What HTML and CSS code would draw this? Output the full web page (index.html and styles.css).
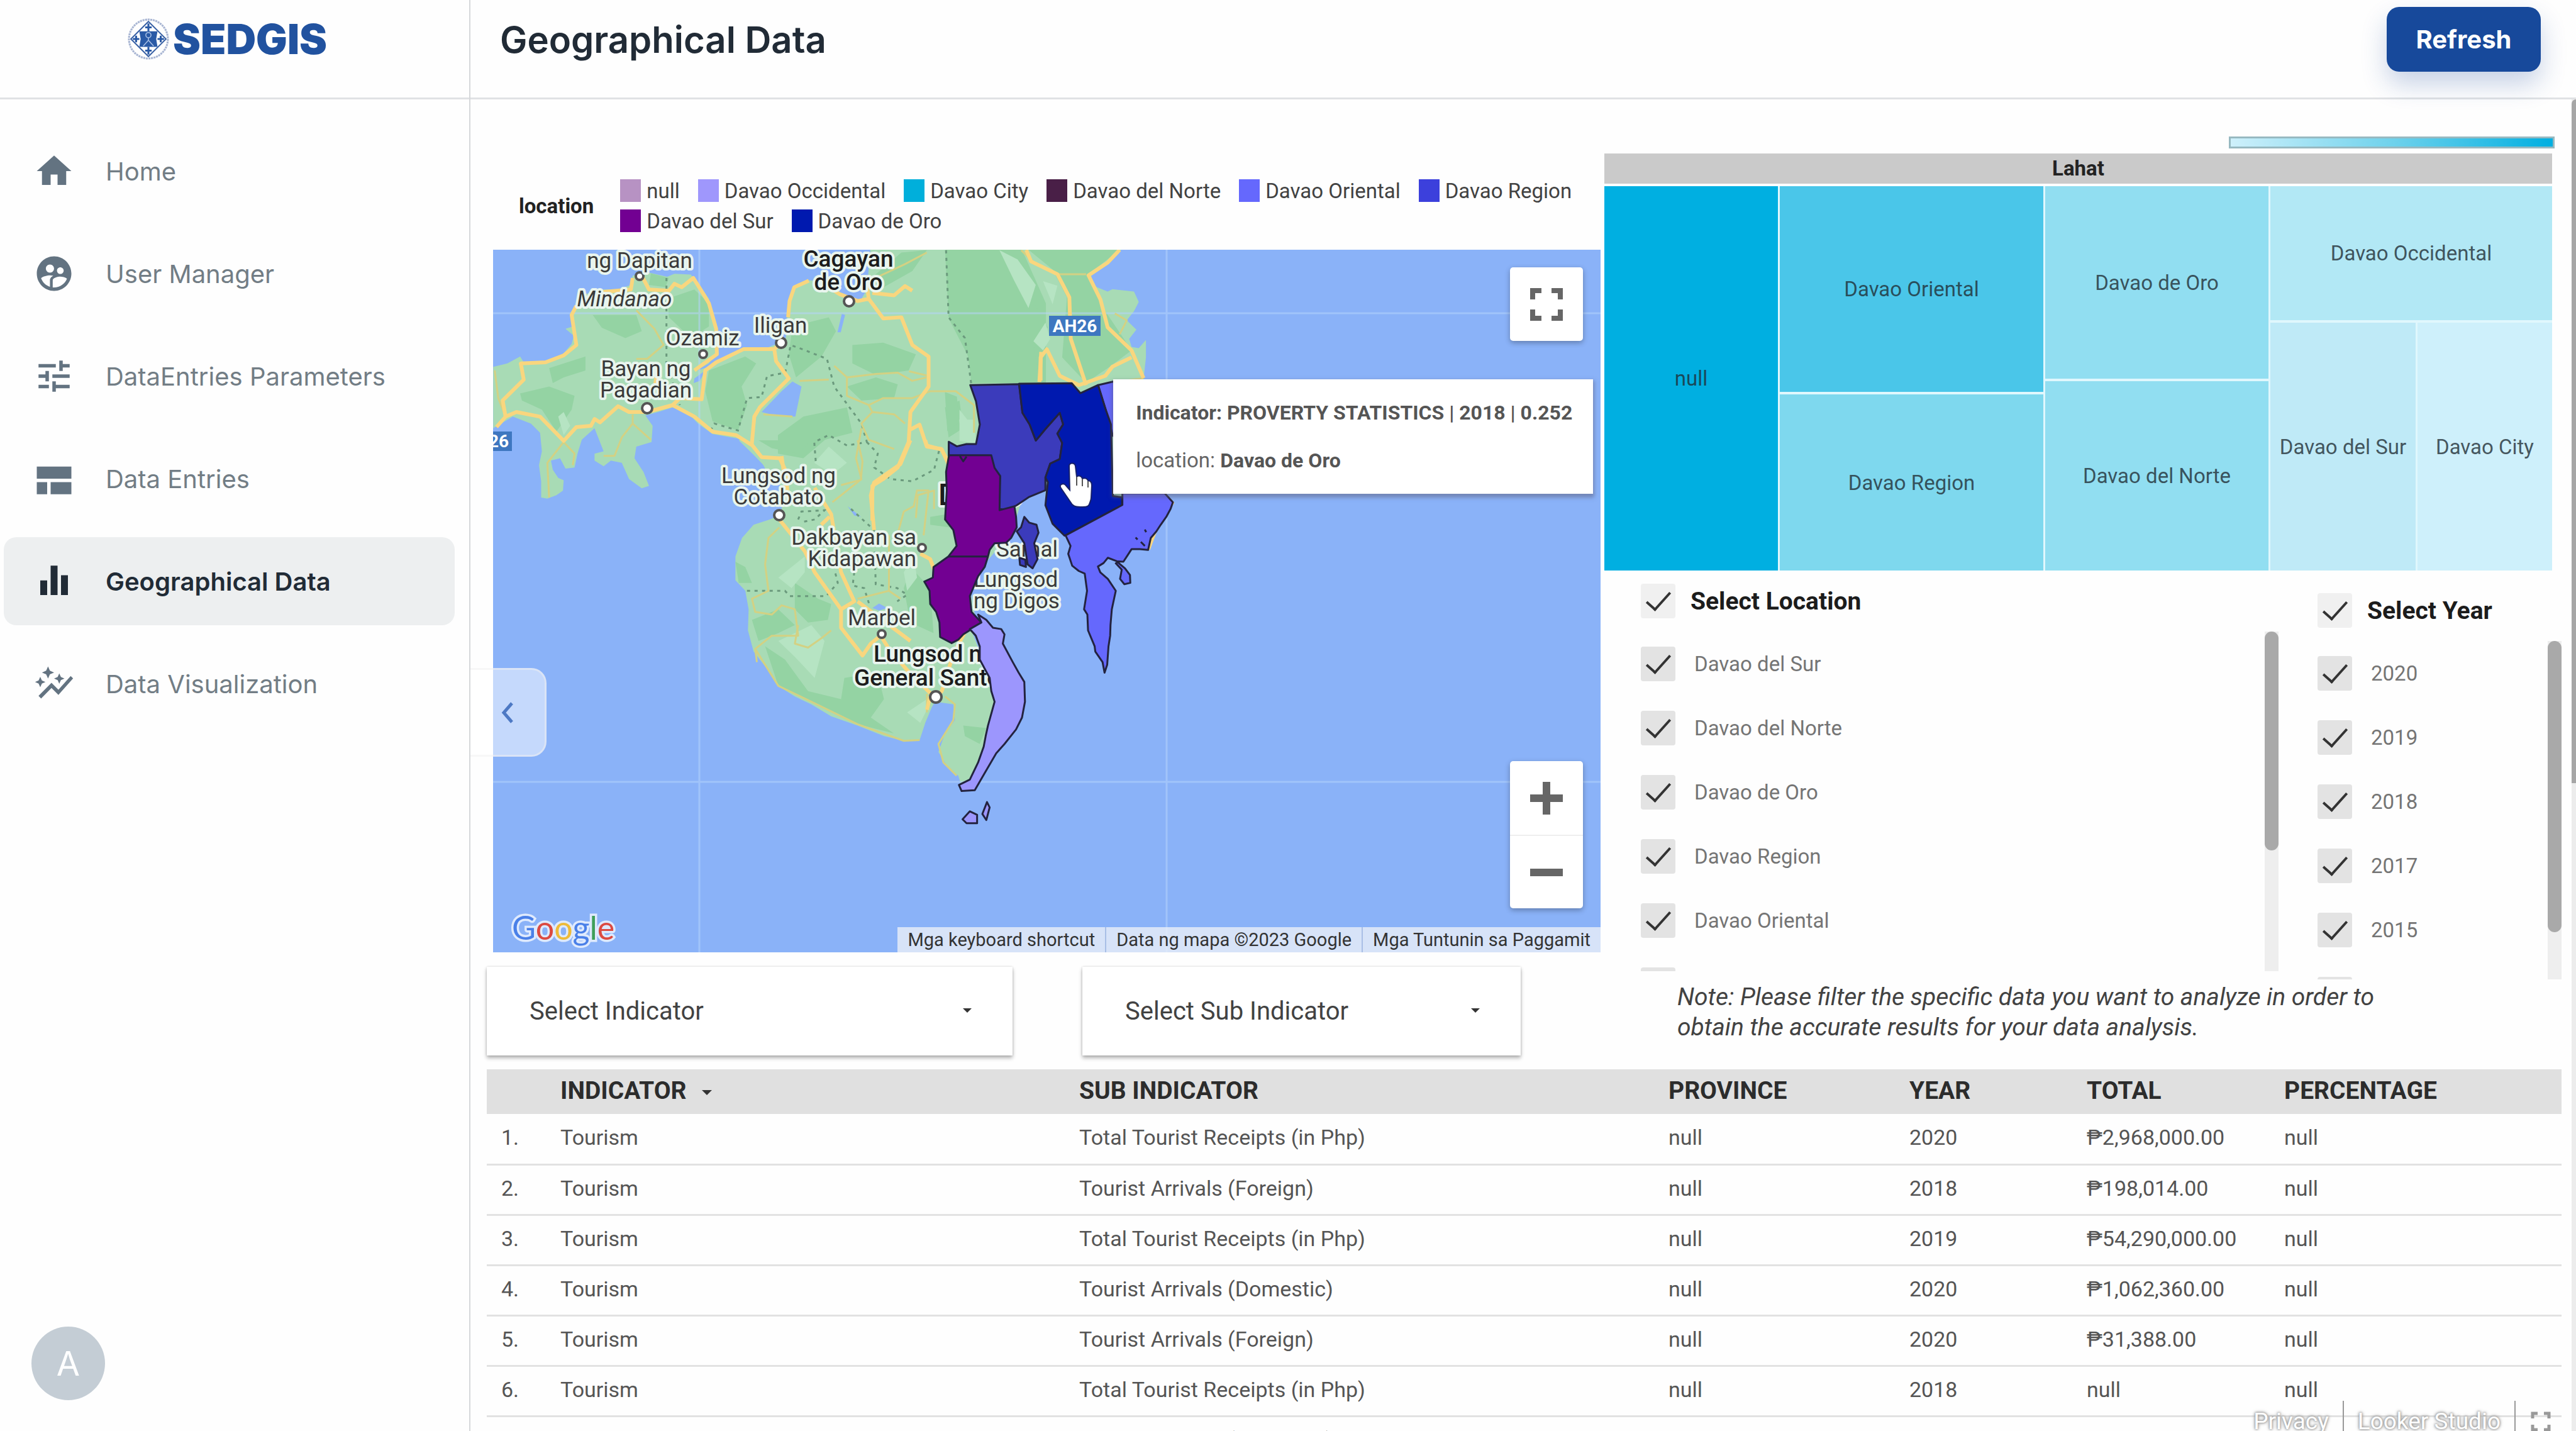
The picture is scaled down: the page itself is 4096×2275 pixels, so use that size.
FILE: index.html
```html
<!DOCTYPE html>
<html lang="en">
<head>
<meta charset="utf-8">
<title>SEDGIS - Geographical Data</title>
<link rel="stylesheet" href="styles.css">
</head>
<body>
<div class="app">
  <aside class="sidebar">
    <a class="brand" href="#">
      <svg class="brand-mark" viewBox="0 0 64 64" aria-hidden="true">
        <circle cx="32" cy="32" r="30" fill="none" stroke="#a9b6d3" stroke-width="3" stroke-dasharray="3 1"/>
        <path d="M32 5 59 32 32 59 5 32Z" fill="#fff" stroke="#3a62a5" stroke-width="2"/>
        <path d="M18 20h28l-2 12 2 12H18l2-12Z" fill="#2a5aa6"/>
        <path d="M32 8v12M32 44v12M8 32h10M46 32h10M27 14h10M27 50h10M13 27v10M51 27v10" stroke="#2a5aa6" stroke-width="3"/>
        <circle cx="32" cy="26" r="4" fill="none" stroke="#a9c0e6" stroke-width="1.5"/>
        <path d="M32 30v4l-8 9M32 34l8 9" fill="none" stroke="#a9c0e6" stroke-width="1.5"/>
      </svg>
      <span class="brand-name">SEDGIS</span>
    </a>
    <nav class="nav">
      <a class="nav-item" href="#"><svg class="nav-icon" viewBox="0 0 24 24"><path d="M10 20v-6h4v6h5v-8h3L12 3 2 12h3v8z"/></svg>Home</a>
      <a class="nav-item" href="#"><svg class="nav-icon" viewBox="0 0 24 24"><path d="M12 2C6.480 2 2 6.480 2 12s4.480 10 10 10 10-4.480 10-10S17.520 2 12 2zm3.610 6.340c1.070 0 1.930.86 1.930 1.930s-.86 1.930-1.930 1.930-1.930-.86-1.930-1.930c-.01-1.070.86-1.930 1.930-1.930zm-6-1.580c1.300 0 2.360 1.060 2.360 2.360s-1.060 2.360-2.360 2.360-2.360-1.060-2.360-2.360c0-1.310 1.050-2.360 2.360-2.360zm0 9.130v3.750c-2.400-.75-4.300-2.600-5.140-4.960 1.050-1.120 3.670-1.690 5.140-1.690.53 0 1.200.08 1.900.22-1.640.87-1.900 2.020-1.900 2.680zM12 20c-.27 0-.53-.01-.79-.04v-4.070c0-1.420 2.940-2.130 4.400-2.130 1.070 0 2.920.39 3.840 1.150C18.280 17.880 15.390 20 12 20z"/></svg>User Manager</a>
      <a class="nav-item" href="#"><svg class="nav-icon" viewBox="0 0 24 24"><path d="M3 17v2h6v-2H3zM3 5v2h10V5H3zm10 16v-2h8v-2h-8v-2h-2v6h2zM7 9v2H3v2h4v2h2V9H7zm14 4v-2H11v2h10zm-6-4h2V7h4V5h-4V3h-2v6z"/></svg>DataEntries Parameters</a>
      <a class="nav-item" href="#"><svg class="nav-icon" viewBox="0 0 24 24"><path d="M2 5h20v7H2zM2 14h6v7H2zM10 14h12v7H10z"/></svg>Data Entries</a>
      <a class="nav-item nav-item-active" href="#" aria-current="page"><svg class="nav-icon" viewBox="0 0 24 24"><path d="M4 11.500h4V20H4zM10 3h4v17h-4zM16 8.500h4V20h-4z"/></svg>Geographical Data</a>
      <a class="nav-item" href="#"><svg class="nav-icon" viewBox="0 0 24 24"><path d="M14.060 9.940 12 9l2.060-.94L15 6l.94 2.060L18 9l-2.060.94L15 12l-.94-2.060zM4 14l.94-2.060L7 11l-2.060-.94L4 8l-.94 2.060L1 11l2.060.94L4 14zm4.500-5 1.090-2.410L12 5.500 9.590 4.410 8.500 2 7.410 4.410 5 5.500l2.410 1.090L8.500 9zm-4 11.500 6-6.010 4 4L23 8.930l-1.410-1.410-7.090 7.970-4-4L3 19l1.500 1.500z"/></svg>Data Visualization</a>
    </nav>
    <div class="avatar">A</div>
  </aside>

  <div class="page">
    <header class="topbar">
      <h1>Geographical Data</h1>
      <button class="refresh" type="button">Refresh</button>
    </header>

    <main class="report">
      <div class="panels">
        <section class="left">
          <div class="legend">
            <strong class="legend-title">location</strong>
            <ul class="legend-list">
              <li><i class="sw sw-null"></i>null</li>
              <li><i class="sw sw-occidental"></i>Davao Occidental</li>
              <li><i class="sw sw-city"></i>Davao City</li>
              <li><i class="sw sw-norte"></i>Davao del Norte</li>
              <li><i class="sw sw-oriental"></i>Davao Oriental</li>
              <li><i class="sw sw-region"></i>Davao Region</li>
              <li><i class="sw sw-sur"></i>Davao del Sur</li>
              <li><i class="sw sw-oro"></i>Davao de Oro</li>
            </ul>
          </div>

          <div class="map">
            <svg class="map-canvas" viewBox="0 0 1761 1117" preserveAspectRatio="xMidYMid slice">
              <rect width="1761" height="1117" fill="#8ab2f8"/>
              <!-- land -->
              <g fill="#a8dbb5">
                <g transform="matrix(.5774 0 0 .3674 -26.3 -149.8)">
                  <path d="M46 915 85 900 120 870 130 895 190 890 235 865 262 815 268 780 245 750 265 740 262 690 275 655 300 600 345 580 390 580 425 560 430 520 470 505 525 525 545 512 590 515 605 545 640 620 650 700 662 760 662 850 640 900 600 935 655 905 700 865 730 835 800 832 850 800 855 760 855 700 862 620 875 570 915 540 960 545 1000 600 1020 630 1060 620 1075 580 1085 400 1600 400 1565 1430 1500 1500 1480 1600 865 1600 850 1500 845 1440 800 1370 790 1340 760 1270 720 1225 650 1205 610 1160 580 1110 540 1090 500 1110 465 1125 485 1170 482 1240 440 1260 435 1310 460 1370 475 1430 455 1440 420 1400 400 1330 370 1320 350 1345 325 1320 325 1290 350 1280 335 1220 325 1180 290 1230 278 1290 270 1350 245 1355 230 1310 205 1320 210 1360 225 1395 240 1405 238 1450 220 1470 195 1485 178 1480 178 1410 172 1340 180 1280 175 1200 150 1160 100 1130 46 1180Z"/>
                </g>
                <g transform="matrix(.7611 0 0 .3674 615.7 -34.6)">
                  <path d="M0 90H505L480 150 440 200 445 250 475 275 485 265 530 275 540 320 530 360 515 400 535 440 520 480 525 515 540 520 555 485 555 560 550 655 550 1160 505 1200 385 1330 345 1200 345 1135 290 1190 280 1300 200 1500 0 1500Z"/>
                </g>
                <g transform="matrix(.525 0 0 .4199 327.6 302.9)">
                  <path d="M120 0 165 55 200 100 245 140 265 200 243 285 215 300 165 320 130 370 110 440 110 530 140 570 150 640 148 720 165 800 215 880 240 930 290 970 340 1000 400 1045 480 1080 560 1120 620 1138 668 1135 685 1070 705 1010 715 990 770 1000 775 1060 745 1110 725 1180 750 1230 785 1270 795 1310 820 1290 870 1150 895 990 875 900 850 800 825 720 840 690 820 560 880 400 960 330 960 0Z"/>
                </g>
              </g>
              <!-- forest relief -->
              <g fill="#94d3a3">
                <g transform="matrix(.5774 0 0 .3674 -26.3 -149.8)">
                  <path d="M320 690 440 690 455 760 410 790 345 745ZM120 1030 200 1000 270 1040 262 1100 220 1195 180 1100 125 1060ZM525 620 600 580 640 640 640 740 590 790 530 700ZM640 930 740 870 770 900 730 1000 745 1080 720 1190 650 1150 630 1020ZM200 920 300 870 300 930 240 960 210 985ZM1035 820 1120 810 1210 860 1190 930 1100 950 1035 900ZM870 740 970 700 990 760 950 870 880 960 860 860ZM900 1130 1020 1090 1035 1200 960 1230 900 1310 830 1290 830 1210ZM1020 1000 1100 960 1160 990 1150 1050 1060 1060ZM1290 400 1500 400 1568 640 1568 985 1365 985 1345 790 1300 700ZM1290 1090 1330 1060 1340 1180 1300 1220ZM480 510 530 530 520 570 475 560ZM1080 540 1170 420 1240 410 1200 500 1110 580Z"/>
                </g>
                <g transform="matrix(.7611 0 0 .3674 615.7 -34.6)">
                  <path d="M140 95H260L300 250 350 430 320 520 335 660 190 670 185 560 145 400ZM310 95H500L435 200 470 360 525 530 480 600 430 670 380 560 390 300 360 180ZM135 710 160 730 165 840 140 880Z"/>
                </g>
                <g transform="matrix(.525 0 0 .4199 327.6 302.9)">
                  <path d="M110 460 140 480 160 540 120 540ZM160 680 240 640 290 700 240 730 180 760ZM290 540 360 600 400 620 390 680 330 690 290 640ZM200 780 260 830 330 950 430 980 440 900 540 880 560 980 520 1050 590 1110 480 1075 340 990 240 930ZM640 480 700 560 710 730 640 690 620 560ZM700 290 750 280 760 330 700 320ZM800 1080 870 1090 850 1150 805 1120ZM180 0H340L300 50 220 30Z"/>
                </g>
              </g>
              <g fill="#b6e4c3">
                <g transform="matrix(.5774 0 0 .3674 -26.3 -149.8)">
                  <path d="M930 1330 970 1260 1020 1330 980 1380ZM225 1130 240 1110 258 1170 240 1210ZM1330 1100 1370 1180 1370 1245 1330 1235ZM1440 410 1490 450 1540 560 1520 660 1480 540Z"/>
                </g>
                <g transform="matrix(.7611 0 0 .3674 615.7 -34.6)">
                  <path d="M320 490 345 410 355 480 340 530ZM165 830 195 830 200 930 170 920ZM340 230 370 250 360 330Z"/>
                </g>
                <g transform="matrix(.525 0 0 .4199 327.6 302.9)">
                  <path d="M240 760 340 700 380 760 350 900 290 820ZM630 1030 690 980 690 1020 670 1070ZM240 520 320 440 320 500 280 560ZM620 500 650 440 660 520 630 570Z"/>
                </g>
              </g>
              <!-- inland water -->
              <g fill="#8ab2f8">
                <g transform="matrix(.5774 0 0 .3674 -26.3 -149.8)"><path d="M870 978 895 1000 878 1130 830 1128 785 1110 840 1020ZM1006 685 1015 690 1003 765 994 765ZM600 965 630 930 615 975 598 985Z"/></g>
                <g transform="matrix(.525 0 0 .4199 327.6 302.9)"><path d="M525 635 545 618 570 635 545 645ZM450 250 490 290 470 285Z"/></g>
              </g>
              <!-- graticule -->
              <path d="M328 0V1117M1071 0V1117M0 101H1761M0 846H1761" stroke="#b4d3fb" stroke-opacity=".55" stroke-width="3"/>
              <!-- provincial borders -->
              <g class="borders">
                <g transform="matrix(.5774 0 0 .3674 -26.3 -149.8)">
                  <path d="M523 530V900L560 1080M645 1190 655 1160 720 1190 745 1050 785 1045 800 955 850 940 865 820 900 840 965 880 985 1000 1060 1160 1075 1240 1020 1255 970 1210 930 1240 935 1340M1075 1240 1105 1290 1095 1350 1140 1400 1200 1410 1260 1360 1275 1270M1293 410 1300 700 1345 790 1362 985"/>
                </g>
                <g transform="matrix(.525 0 0 .4199 327.6 302.9)">
                  <path d="M145 570 260 570 275 590 385 590 420 540 410 490M300 300 310 270 380 265 350 300 310 310M460 260 530 340 535 545 600 560 630 585 600 610M470 500 465 550 500 560 515 620"/>
                </g>
              </g>
              <!-- minor roads -->
              <g class="roads-minor">
                <g transform="matrix(.5774 0 0 .3674 -26.3 -149.8)">
                  <path d="M50 930 60 1050 80 1130M440 670 490 750 515 820 470 880 440 880M430 1120 430 1160 400 1220 380 1300 350 1300M430 1160 480 1230M200 1480 195 1330 240 1240 270 1290 265 1340M985 910 1020 960 1100 945 1160 940 1200 975 1240 960M970 970 890 975M1020 960 1020 1040 1080 1080 1090 1110 1060 1160 1080 1230 1150 1270M1090 1110 1150 1120 1180 1160M1080 1080 1120 1050 1200 1050 1250 1020 1320 1020 1370 1080 1370 1200M1060 1180 1045 1310 1060 1400 980 1500M870 1130 790 1120M1085 540 1180 470 1240 420M1500 410 1540 470M1210 1568 1215 1470 1260 1450V1530"/>
                </g>
                <g transform="matrix(.525 0 0 .4199 327.6 302.9)">
                  <path d="M243 330 210 370 200 470 210 570 160 600 170 650 220 660 250 625 290 640 300 740 220 740 170 790 175 840M300 700 290 770 330 785 370 750 400 720M430 170 490 150 495 80 480 0M600 360 620 270 650 250 660 190H695L680 360M575 360 575 570 480 600M575 570 610 600M170 790 240 930 340 990 480 1075 620 1138 668 1135M690 960V1030M745 970 775 1000 770 1060 725 1150 740 1220 780 1270"/>
                </g>
                <g transform="matrix(.7611 0 0 .3674 615.7 -34.6)">
                  <path d="M370 200H430M490 370 515 400 500 460M60 620 100 640M480 670 550 650"/>
                </g>
              </g>
              <!-- highways -->
              <g class="roads">
                <g transform="matrix(.5774 0 0 .3674 -26.3 -149.8)">
                  <path d="M55 1175 80 1130 110 1110 175 1130 240 1235 275 1175 315 1170 325 1140 340 1155 390 1085 420 1110 470 1110 540 1080 600 1130 650 1195 715 1210 760 1255 785 1305 835 1310 850 1360 860 1500M80 1130 72 1060 130 970 122 900 190 895 240 865 275 820 270 770 262 690 275 650M430 530 425 580 350 590M455 520 475 580 530 585 545 555 565 570 597 530 625 600 640 640 660 750 662 860 600 930M495 960 490 1010M540 1080 560 1050 620 1055 630 930 660 895 735 838 820 838 825 890 860 965 780 1090 765 1130 758 1250M820 838 845 800M858 700 862 630 875 570 915 542M960 560 1000 600 1050 630 1080 620 1075 560M1080 620 1120 705 1170 700 1200 820 1245 870 1245 1000 1195 1110 1190 1240 1160 1350 1120 1400 1090 1430 1090 1580M1090 595 1150 605 1180 565 1200 585M1190 1190 1220 1165 1240 1260 1280 1270 1300 1330M1550 980 1555 850"/>
                </g>
                <g transform="matrix(.7611 0 0 .3674 615.7 -34.6)">
                  <path d="M305 95 315 145 370 200 395 300 398 480 430 680M500 95 475 150 435 205 460 310 475 430 525 530 550 650M335 660 335 560 348 525 375 640 415 680 470 640 485 600 525 560M598 1165 610 1190 585 1250 560 1390"/>
                </g>
                <g transform="matrix(.525 0 0 .4199 327.6 302.9)">
                  <path d="M250 60 265 200M243 300 320 420 350 500 430 640 430 710 495 815 520 770 550 740 575 790 630 870 710 970M350 180 400 280 430 500 470 610 430 640M640 0 610 90 530 160 520 210 530 340M480 610 640 760M685 0 690 20 735 35 755 90M670 430 700 450 715 500M810 715 770 810 735 950 715 980M700 970 690 1020M395 290 370 320"/>
                </g>
              </g>
              <!-- towns -->
              <g class="towns">
                <circle cx="233" cy="42" r="6"/><circle cx="334" cy="166" r="6"/><circle cx="245" cy="252" r="8"/><circle cx="458" cy="148" r="8"/><circle cx="566" cy="82" r="8"/><circle cx="455" cy="422" r="8"/><circle cx="682" cy="474" r="6"/><circle cx="618" cy="611" r="6"/><circle cx="704" cy="711" r="9"/>
              </g>
              <g class="map-text">
                <text x="233" y="29" text-anchor="middle">ng Dapitan</text>
                <text x="209" y="90" text-anchor="middle" font-style="italic">Mindanao</text>
                <text x="457" y="132" text-anchor="middle">Iligan</text>
                <text x="333" y="152" text-anchor="middle">Ozamiz</text>
                <text x="243" y="201" text-anchor="middle">Bayan ng</text>
                <text x="243" y="235" text-anchor="middle">Pagadian</text>
                <text x="454" y="371" text-anchor="middle">Lungsod ng</text>
                <text x="454" y="405" text-anchor="middle">Cotabato</text>
                <text x="673" y="469" text-anchor="end">Dakbayan sa</text>
                <text x="673" y="503" text-anchor="end">Kidapawan</text>
                <text x="618" y="597" text-anchor="middle">Marbel</text>
                <text x="800" y="488">Samal</text>
                <text x="764" y="536">Lungsod</text>
                <text x="764" y="570">ng Digos</text>
              </g>
              <g class="map-text map-text-city">
                <text x="565" y="27" text-anchor="middle">Cagayan</text>
                <text x="565" y="64" text-anchor="middle">de Oro</text>
                <text x="605" y="655">Lungsod ng</text>
                <text x="574" y="693">General Santos</text>
                <text x="708" y="406" class="map-text-capital">Davao</text>
              </g>
              <!-- provinces -->
              <g class="provinces">
                <g transform="matrix(.7611 0 0 .3674 615.7 -34.6)">
                  <path fill="#3b3bbb" d="M188 680 290 676 297 800 312 850 325 920 345 870 375 800 382 850 370 890 380 930 375 1000 355 1020 345 1080 345 1135 310 1165 285 1200 265 1222 248 1215 250 1075 238 1050 230 985H143L143 925 160 945 180 935 200 935 208 850 200 750Z"/>
                  <path fill="#6568fd" d="M455 680 486 665 560 700 580 900 486 900 470 780Z"/>
                  <path fill="#0019af" d="M290 674 400 672 418 715 455 680 470 780 482 850 486 1160 505 1165V1200L385 1332 360 1280 345 1200 350 1100 345 1080 355 1020 375 1000 380 930 370 890 382 850 375 800 345 870 325 920 312 850 297 800Z"/>
                </g>
                <g transform="matrix(.525 0 0 .4199 327.6 302.9)">
                  <path fill="#6568fd" d="M1110 360 1282 245V200H1410L1435 235 1428 260 1415 290 1398 320 1385 345 1368 370 1360 415 1335 412 1310 412 1298 435 1285 460 1265 458 1238 445 1225 465 1208 478 1215 500 1238 525 1262 570 1250 640 1246 700 1245 740 1240 780 1236 850 1228 880 1222 840 1200 800 1198 780 1178 720 1176 660 1166 640 1175 570 1168 505 1150 495 1130 475 1118 430 1125 400ZM1268 462 1290 485 1305 510 1306 540 1288 545 1275 525 1280 490 1262 466Z"/>
                  <path fill="#720092" d="M757 57H885L895 105 912 135 910 265 955 250 960 290 962 330 945 370 930 388 895 390 880 415 875 440 865 480 845 515 830 560 820 590 825 650 840 670 855 690 825 715 800 735 785 755 765 768 730 745 728 690 718 650 700 620 698 570 682 535 708 520 710 480 755 440 780 400 770 340 745 300 750 190 748 120Z"/>
                  <path fill="none" d="M755 440H875M790 60 800 80 810 62M1322 368 1328 376M1338 385 1350 400M1350 338 1354 348"/>
                  <path fill="#3b3bbb" d="M985 290 1000 312 1022 320 1028 350 1015 390 1025 450 1010 485 995 470 985 390 962 345 975 330ZM970 445 988 452 990 480 972 472Z"/>
                  <path fill="#9c96fd" d="M845 660 870 680 890 710 915 715 925 735 920 770 950 840 968 880 985 915 987 990 978 1050 960 1095 925 1150 900 1185 865 1260 835 1325 795 1328 787 1305 820 1285 845 1220 862 1160 868 1120 875 1080 895 990 885 950 880 900 850 830 850 780 838 740 820 715 855 690ZM798 1435 820 1405 842 1418 842 1450 810 1450ZM872 1370 880 1390 870 1438 858 1415Z"/>
                </g>
              </g>
              <!-- route shields -->
              <g class="shields">
                <rect x="884" y="105" width="82" height="32"/><text x="925" y="131" text-anchor="middle">AH26</text>
                <rect x="0" y="289" width="30" height="31"/><text x="-7" y="314">26</text>
              </g>
              <!-- pointer -->
              <path d="M916 344c0-6 9-6 10 0l2 17c3-3 8-1 9 3 4-2 8 0 9 3 4 0 6 3 6 8l-1 19c0 5-2 7-3 11-2 4-6 4-14 4-9 0-13-2-16-8l-15-22c-4-6 4-9 8-4l6 7z" fill="#fff" stroke="#16206a" stroke-width="2"/>
              <path d="M928 361v14M937 364v12M946 368v10" stroke="#555" stroke-width="2"/>
            </svg>

            <div class="tooltip">
              <p class="tooltip-line"><b>Indicator: PROVERTY STATISTICS | 2018 | 0.252</b></p>
              <p class="tooltip-line">location: <b>Davao de Oro</b></p>
            </div>
            <button class="map-button map-fullscreen" type="button" aria-label="Fullscreen">
              <svg viewBox="0 0 52 52"><path d="M4 18V4h14M34 4h14v14M48 34v14H34M18 48H4V34" fill="none" stroke="#666" stroke-width="8"/></svg>
            </button>
            <div class="map-zoom">
              <button class="map-button" type="button" aria-label="Zoom in"><svg viewBox="0 0 52 52"><path d="M0 26h52M26 0v52" stroke="#666" stroke-width="12"/></svg></button>
              <button class="map-button" type="button" aria-label="Zoom out"><svg viewBox="0 0 52 52"><path d="M0 26h52" stroke="#666" stroke-width="12"/></svg></button>
            </div>
            <div class="google"><span class="g-blue">G</span><span class="g-red">o</span><span class="g-yellow">o</span><span class="g-blue">g</span><span class="g-green">l</span><span class="g-red">e</span></div>
            <div class="attribution"><a href="#">Mga keyboard shortcut</a><span>Data ng mapa ©2023 Google</span><a href="#">Mga Tuntunin sa Paggamit</a></div>
          </div>

          <div class="dropdowns">
            <div class="dropdown"><select aria-label="Select Indicator"><option>Select Indicator</option></select></div>
            <div class="dropdown dropdown-sub"><select aria-label="Select Sub Indicator"><option>Select Sub Indicator</option></select></div>
          </div>
        </section>

        <section class="right">
          <div class="treemap">
            <div class="scale"></div>
            <div class="tm-head">Lahat</div>
            <div class="tm-body">
              <div class="tm-cell tm-null">null</div>
              <div class="tm-col tm-col-a">
                <div class="tm-cell tm-oriental">Davao Oriental</div>
                <div class="tm-cell tm-region">Davao Region</div>
              </div>
              <div class="tm-col tm-col-b">
                <div class="tm-cell tm-oro">Davao de Oro</div>
                <div class="tm-cell tm-norte">Davao del Norte</div>
              </div>
              <div class="tm-col tm-col-c">
                <div class="tm-cell tm-occidental">Davao Occidental</div>
                <div class="tm-pair">
                  <div class="tm-cell tm-sur">Davao del Sur</div>
                  <div class="tm-cell tm-city">Davao City</div>
                </div>
              </div>
            </div>
          </div>

          <div class="filters">
            <fieldset class="filter filter-location">
              <label class="filter-head"><input type="checkbox" checked>Select Location</label>
              <div class="filter-scroll">
                <div class="filter-list">
                  <label><input type="checkbox" checked>Davao del Sur</label>
                  <label><input type="checkbox" checked>Davao del Norte</label>
                  <label><input type="checkbox" checked>Davao de Oro</label>
                  <label><input type="checkbox" checked>Davao Region</label>
                  <label><input type="checkbox" checked>Davao Oriental</label>
                  <label><input type="checkbox" aria-label="Davao Occidental"></label>
                </div>
                <div class="track"><div class="thumb"></div></div>
              </div>
            </fieldset>
            <fieldset class="filter filter-year">
              <label class="filter-head"><input type="checkbox" checked>Select Year</label>
              <div class="filter-scroll">
                <div class="filter-list">
                  <label><input type="checkbox" checked>2020</label>
                  <label><input type="checkbox" checked>2019</label>
                  <label><input type="checkbox" checked>2018</label>
                  <label><input type="checkbox" checked>2017</label>
                  <label><input type="checkbox" checked>2015</label>
                  <label><input type="checkbox" aria-label="2014"></label>
                </div>
                <div class="track"><div class="thumb"></div></div>
              </div>
            </fieldset>
          </div>
          <p class="note">Note: Please filter the specific data you want to analyze in order to<br>obtain the accurate results for your data analysis.</p>
        </section>
      </div>

      <table class="data">
        <colgroup><col class="c-num"><col class="c-indicator"><col class="c-sub"><col class="c-province"><col class="c-year"><col class="c-total"><col></colgroup>
        <thead>
          <tr><th></th><th>INDICATOR<i class="sort"></i></th><th>SUB INDICATOR</th><th>PROVINCE</th><th>YEAR</th><th>TOTAL</th><th>PERCENTAGE</th></tr>
        </thead>
        <tbody>
          <tr><td>1.</td><td>Tourism</td><td>Total Tourist Receipts (in Php)</td><td>null</td><td>2020</td><td>₱2,968,000.00</td><td>null</td></tr>
          <tr><td>2.</td><td>Tourism</td><td>Tourist Arrivals (Foreign)</td><td>null</td><td>2018</td><td>₱198,014.00</td><td>null</td></tr>
          <tr><td>3.</td><td>Tourism</td><td>Total Tourist Receipts (in Php)</td><td>null</td><td>2019</td><td>₱54,290,000.00</td><td>null</td></tr>
          <tr><td>4.</td><td>Tourism</td><td>Tourist Arrivals (Domestic)</td><td>null</td><td>2020</td><td>₱1,062,360.00</td><td>null</td></tr>
          <tr><td>5.</td><td>Tourism</td><td>Tourist Arrivals (Foreign)</td><td>null</td><td>2020</td><td>₱31,388.00</td><td>null</td></tr>
          <tr><td>6.</td><td>Tourism</td><td>Total Tourist Receipts (in Php)</td><td>null</td><td>2018</td><td>null</td><td>null</td></tr>
          <tr><td>7.</td><td>Tourism</td><td>Tourist Arrivals (Domestic)</td><td>null</td><td>2019</td><td>₱4,297,207.00</td><td>null</td></tr>
        </tbody>
      </table>
    </main>

    <button class="collapse" type="button" aria-label="Collapse sidebar"><svg viewBox="0 0 20 36"><path d="M17 3 4 18l13 15" fill="none" stroke="#4d79c4" stroke-width="5"/></svg></button>
    <div class="page-track"><div class="page-thumb"></div></div>
    <div class="studio">
      <a href="#">Privacy</a>
      <a href="#">Looker Studio</a>
      <button type="button" aria-label="Full screen"><svg viewBox="0 0 32 32"><path d="M3 11V3h8M21 3h8v8M29 21v8h-8M11 29H3v-8" fill="none" stroke="#999" stroke-width="5"/></svg></button>
    </div>
  </div>
</div>
</body>
</html>
```

FILE: styles.css
```css
* { box-sizing: border-box; }

body {
  margin: 0;
  background: #fefefe;
  color: #424242;
  font-family: Roboto, "Liberation Sans", sans-serif;
  font-size: 33px;
}

a { color: inherit; text-decoration: none; }
button, input, select { font: inherit; color: inherit; }
button { border: 0; padding: 0; cursor: pointer; }

.app {
  display: grid;
  grid-template-columns: 748px minmax(0, 1fr);
  height: 100vh;
  overflow: hidden;
}

/* Sidebar */
.sidebar {
  display: flex;
  flex-direction: column;
  border-right: 2px solid #d6d8da;
}
.brand {
  display: flex;
  align-items: center;
  gap: 6px;
  height: 158px;
  padding: 0 0 32px 203px;
  border-bottom: 3px solid #e0e2e4;
}
.brand-mark { width: 66px; height: 66px; }
.brand-name {
  color: #21529f;
  font-family: Inter, sans-serif;
  font-size: 66px;
  font-weight: 900;
  line-height: 66px;
}
.nav {
  display: flex;
  flex-direction: column;
  gap: 23px;
  padding: 44px 23px 0 6px;
}
.nav-item {
  display: flex;
  align-items: center;
  gap: 49px;
  height: 140px;
  padding-left: 47px;
  border-radius: 20px;
  color: #727d85;
  font-family: Inter, sans-serif;
  font-size: 40px;
}
.nav-icon { width: 66px; height: 66px; fill: #637381; }
.nav-item-active { background: #edeff0; color: #212b36; font-weight: 600; }
.nav-item-active .nav-icon { fill: #212b36; }
.avatar {
  display: grid;
  place-items: center;
  width: 117px;
  height: 117px;
  margin: auto 0 49px 50px;
  border-radius: 50%;
  background: #c4cdd5;
  color: #fff;
  font-family: Inter, sans-serif;
  font-size: 54px;
}

/* Header */
.page { position: relative; min-width: 0; overflow: hidden; }
.topbar {
  display: flex;
  align-items: center;
  justify-content: space-between;
  height: 158px;
  padding: 0 56px 30px 47px;
  border-bottom: 3px solid #e0e2e4;
}
h1 {
  margin: 0;
  color: #212b36;
  font-family: Inter, sans-serif;
  font-size: 58px;
  font-weight: 600;
}
.refresh {
  width: 245px;
  height: 103px;
  border-radius: 20px;
  background: #17499b;
  box-shadow: 0 20px 40px rgba(23, 73, 155, .24);
  color: #fff;
  font-family: Inter, sans-serif;
  font-size: 40px;
  font-weight: 700;
}

/* Report */
.report { padding: 0 23px 0 26px; }
.panels { display: grid; grid-template-columns: 1777fr 1522fr; }

.legend {
  display: flex;
  align-items: center;
  gap: 42px;
  padding: 127px 0 28px 51px;
}
.legend-title { color: #222; }
.legend-list {
  display: flex;
  flex-wrap: wrap;
  gap: 12px 29px;
  margin: 0;
  padding: 0;
  list-style: none;
}
.legend-list li {
  display: flex;
  align-items: center;
  gap: 9px;
  height: 36px;
}
.sw { width: 33px; height: 36px; }
.sw-null { background: #b792c3; }
.sw-occidental { background: #9f97fc; }
.sw-city { background: #00afdb; }
.sw-norte { background: #491f47; }
.sw-oriental { background: #6568fd; }
.sw-region { background: #3c40dc; }
.sw-sur { background: #720092; }
.sw-oro { background: #0019af; }

/* Map */
.map {
  position: relative;
  margin: 0 6px 0 10px;
  aspect-ratio: 1761 / 1117;
  overflow: hidden;
}
.map-canvas { display: block; width: 100%; height: 100%; }
.borders path { fill: none; stroke: #6b9a7d; stroke-width: 3; stroke-dasharray: 5 7; vector-effect: non-scaling-stroke; }
.roads path, .roads-minor path { fill: none; stroke-linejoin: round; vector-effect: non-scaling-stroke; }
.roads path { stroke: #f9d67e; stroke-width: 6; }
.roads-minor path { stroke: #d3d183; stroke-width: 3; }
.towns circle { fill: #fff; stroke: #555; stroke-width: 4; }
.map-text {
  fill: #3a3a3a;
  stroke: #e9f5ee;
  stroke-width: 8px;
  stroke-linejoin: round;
  paint-order: stroke;
  font-size: 35px;
}
.map-text-city { fill: #1c1c1c; font-size: 37px; font-weight: 500; }
.map-text-capital { font-size: 48px; }
.provinces path { stroke: #23233f; stroke-width: 3; stroke-linejoin: round; vector-effect: non-scaling-stroke; }
.shields rect { fill: #3e77c0; }
.shields text { fill: #fff; font-size: 28px; font-weight: 700; }

.tooltip {
  position: absolute;
  top: 18.4%;
  left: 56%;
  width: 43.3%;
  padding: 33px 36px;
  background: #fff;
  box-shadow: 0 4px 6px 2px rgba(90, 90, 120, .5);
  color: #666;
}
.tooltip b { color: #555; font-size: 32px; }
.tooltip-line { margin: 0; line-height: 40px; white-space: nowrap; }
.tooltip-line + .tooltip-line { margin-top: 36px; }

.map-button {
  display: grid;
  place-items: center;
  width: 116px;
  height: 117px;
  background: #fff;
}
.map-button svg { width: 52px; height: 52px; }
.map-fullscreen, .map-zoom {
  position: absolute;
  right: 28px;
  border-radius: 5px;
  background: #fff;
  box-shadow: 0 3px 8px rgba(0, 0, 0, .3);
}
.map-fullscreen { top: 28px; }
.map-zoom { bottom: 70px; }
.map-zoom .map-button { background: none; }
.map-zoom .map-button + .map-button { border-top: 2px solid #eee; }
.google {
  position: absolute;
  left: 30px;
  bottom: 6px;
  font-family: Lato, sans-serif;
  font-size: 52px;
  line-height: 68px;
  -webkit-text-stroke: 7px #dfeafd;
  paint-order: stroke fill;
}
.g-blue { color: #4a80e8; }
.g-red { color: #dc4a41; }
.g-yellow { color: #eebb3a; }
.g-green { color: #3f9f5a; }
.attribution {
  position: absolute;
  right: 0;
  bottom: 0;
  display: flex;
  background: rgba(240, 243, 248, .75);
  color: #333;
  font-size: 29px;
  line-height: 40px;
}
.attribution > * { padding: 0 16px; }
.attribution > * + * { border-left: 2px solid #a9bfe6; }

/* Dropdowns */
.dropdowns { display: flex; gap: 111px; padding: 23px 0 22px; }
.dropdown {
  position: relative;
  width: 836px;
  height: 141px;
  background: #fff;
  box-shadow: 0 4px 6px rgba(0, 0, 0, .3), 0 0 3px rgba(0, 0, 0, .16);
}
.dropdown-sub { width: 697px; }
.dropdown select {
  width: 100%;
  height: 100%;
  padding: 0 68px;
  border: 0;
  background: none;
  appearance: none;
  font-size: 40px;
}
.dropdown::after {
  content: "";
  position: absolute;
  top: 66px;
  right: 65px;
  border: 7px solid transparent;
  border-top-color: #333;
  border-bottom: 0;
}

/* Treemap */
.treemap { padding: 59px 15px 0 0; }
.scale {
  width: 518px;
  height: 19px;
  margin: 0 -4px 8px auto;
  border: 3px solid #97b9c1;
  background: linear-gradient(90deg, #cef0fb, #6fd2ec 50%, #00afe1);
}
.tm-head {
  height: 48px;
  margin-bottom: 4px;
  background: #cacaca;
  color: #222;
  font-weight: 700;
  line-height: 48px;
  text-align: center;
}
.tm-body {
  display: grid;
  grid-template-columns: 276fr 419fr 355fr 448fr;
  gap: 3px;
  height: 611px;
  background: #e0f7fd;
}
.tm-col { display: grid; gap: 4px; }
.tm-col-a { grid-template-rows: 327fr 280fr; }
.tm-col-b { grid-template-rows: 306fr 301fr; }
.tm-col-c { grid-template-rows: 213fr 394fr; }
.tm-pair { display: grid; grid-template-columns: 231fr 214fr; gap: 3px; }
.tm-cell { display: grid; place-items: center; color: rgba(33, 45, 52, .8); white-space: nowrap; }
.tm-null { background: #00afe1; }
.tm-oriental { background: #4ac6e9; }
.tm-region { background: #7ed8ee; }
.tm-oro, .tm-norte { background: #91def1; }
.tm-occidental { background: #b2e8f5; }
.tm-sur { background: #bfeaf7; }
.tm-city { background: #cef0fb; }

/* Filters */
.filters { display: flex; justify-content: space-between; padding-left: 58px; }
.filter { margin: 0; padding: 0; border: 0; }
.filter-location { width: 1014px; padding-top: 21px; }
.filter-year { width: 388px; padding-top: 36px; }
.filter label { display: flex; align-items: center; gap: 30px; height: 55px; }
.filter .filter-head { gap: 24px; color: #1c1c1c; font-size: 39px; font-weight: 700; }
.filter input {
  display: grid;
  place-items: center;
  width: 55px;
  height: 55px;
  margin: 0;
  border-radius: 4px;
  appearance: none;
  background: #e3e3e3;
}
.filter-head input { background: #f0f0f0; }
.filter input:checked::after {
  content: "";
  width: 16px;
  height: 34px;
  margin-bottom: 10px;
  border: solid #333;
  border-width: 0 4px 4px 0;
  rotate: 42deg;
}
.filter-scroll { display: flex; justify-content: space-between; height: 540px; margin-top: 21px; }
.filter-list {
  display: flex;
  flex-direction: column;
  gap: 47px;
  padding-top: 24px;
  overflow: hidden;
  color: #757575;
}
.filter-list label { flex: none; }
.filter-year .filter-scroll { height: 538px; }
.track { width: 22px; background: #eee; }
.thumb { height: 348px; border-radius: 11px; background: #a9a9a9; }
.filter-year .thumb { height: 463px; }
.note {
  margin: 4px 0 0 116px;
  color: #424242;
  font-size: 39px;
  font-style: italic;
  line-height: 48px;
  white-space: nowrap;
}

/* Table */
.data { width: 100%; border-collapse: collapse; table-layout: fixed; }
.c-num { width: 117px; }
.c-indicator { width: 825px; }
.c-sub { width: 937px; }
.c-province { width: 383px; }
.c-year { width: 282px; }
.c-total { width: 314px; }
.data th {
  height: 71px;
  padding: 0 0 3px;
  background: #e0e0e0;
  color: #2c2c2c;
  font-size: 39px;
  font-weight: 700;
  text-align: left;
}
.data td {
  height: 80px;
  padding: 0 0 4px;
  border-bottom: 3px solid #e2e2e2;
  color: #555;
  font-size: 34px;
}
.data td:first-child { padding-left: 23px; }
.sort {
  display: inline-block;
  margin-left: 24px;
  border: 8px solid transparent;
  border-top-color: #333;
  border-bottom: 0;
  vertical-align: middle;
}

/* Overlays */
.collapse {
  position: absolute;
  top: 1062px;
  left: 0;
  display: grid;
  place-items: center;
  width: 121px;
  height: 141px;
  border: 3px solid rgba(240, 240, 240, .5);
  border-left: 0;
  border-radius: 0 24px 24px 0;
  background: rgba(255, 255, 255, .5);
}
.collapse svg { width: 20px; height: 36px; }
.page-track {
  position: absolute;
  top: 158px;
  right: 0;
  bottom: 0;
  width: 7px;
  background: #ececec;
}
.page-thumb { height: 1087px; border-radius: 7px 0 0 0; background: #a6a6a6; }
.studio {
  position: absolute;
  right: 23px;
  bottom: -18px;
  display: flex;
  align-items: center;
  height: 66px;
  color: #fff;
  font-size: 37px;
  line-height: 66px;
  text-shadow: 0 0 3px #999, 0 0 4px #999, 0 0 6px #aaa;
}
.studio a { padding: 0 22px; border-right: 2px solid #999; }
.studio button { width: 73px; padding: 0 17px 0 24px; background: none; line-height: 0; }
.studio svg { width: 32px; height: 32px; }
```
